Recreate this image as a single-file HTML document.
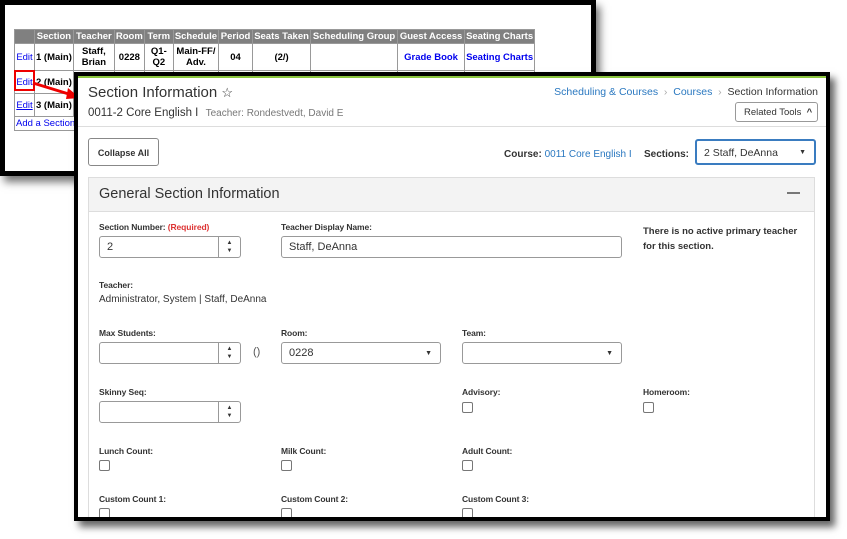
<!DOCTYPE html>
<html><head><meta charset="utf-8"><style>
*{margin:0;padding:0;box-sizing:border-box}
body{width:847px;height:539px;background:#fff;position:relative;overflow:hidden;font-family:"Liberation Sans",sans-serif;color:#333}
.a{position:absolute}
#back{left:0;top:0;width:596px;height:176px;border:5px solid #000;background:#fff;box-shadow:4px 6px 8px rgba(0,0,0,.55)}
table{position:absolute;left:9px;top:24px;border-collapse:collapse;font-size:9.5px;font-weight:bold;color:#000}
td,th{border:1px solid #999;text-align:center;padding:0 1px;white-space:nowrap}
th{background:#808080;color:#fff;height:14px}
td a{color:#00e;font-weight:bold}
#front{left:74px;top:72px;width:756px;height:449px;border:4px solid #000;background:#fff;box-shadow:5px 6px 7px rgba(0,0,0,.6);overflow:hidden}
.lbl{font-size:8.5px;font-weight:bold;color:#333;letter-spacing:-.1px}
.inp{border:1px solid #999;border-radius:3px;background:#fff;height:22px;font-size:11px;padding:4px 7px;color:#333}
.spin{position:absolute;right:0;top:0;width:22px;height:100%;border-left:1px solid #999;font-size:6px;line-height:8px;text-align:center;padding-top:2px}
.cb{width:11px;height:11px;border:1px solid #777;border-radius:2px;background:#fff}
.dd{position:absolute;right:8px;top:7px;font-size:7px}
</style></head><body>
<div id="back" class="a">
<table>
<tr><th style="width:20px"></th><th style="width:37px">Section</th><th style="width:41px">Teacher</th><th style="width:29px">Room</th><th style="width:29px">Term</th><th style="width:44px">Schedule</th><th style="width:34px">Period</th><th style="width:58px">Seats Taken</th><th style="width:87px">Scheduling Group</th><th style="width:67px">Guest Access</th><th style="width:69px">Seating Charts</th></tr>
<tr style="height:27px"><td><a style="font-weight:normal">Edit</a></td><td>1 (Main)</td><td>Staff,<br>Brian</td><td>0228</td><td>Q1-<br>Q2</td><td>Main-FF/<br>Adv.</td><td>04</td><td>(2/)</td><td></td><td><a>Grade Book</a></td><td><a>Seating Charts</a></td></tr>
<tr style="height:23px"><td><a style="font-weight:normal">Edit</a></td><td>2 (Main)</td><td>Staff</td><td></td><td>Q1</td><td>Main-FF/</td><td></td><td></td><td></td><td></td><td></td></tr>
<tr style="height:23px"><td><a style="font-weight:normal;text-decoration:underline">Edit</a></td><td>3 (Main)</td><td></td><td></td><td></td><td></td><td></td><td></td><td></td><td></td><td></td></tr>
<tr style="height:14px"><td colspan="11" style="text-align:left"><a style="font-weight:normal">Add a Section</a></td></tr>
</table>
</div>
<div class="a" style="left:14px;top:70px;width:21px;height:21px;border:2px solid #e00"></div>
<svg class="a" style="left:30px;top:80px" width="52" height="22"><line x1="3" y1="3" x2="42" y2="15" stroke="#e00" stroke-width="3"/><polygon points="50,18 38,8 36,19" fill="#e00"/></svg>

<div id="front" class="a">
<div class="a" style="left:0;top:0;width:100%;height:2px;background:#8cc63f"></div>
<div class="a" style="left:10px;top:8px;font-size:15px;color:#333">Section Information <span style="font-size:13px">☆</span></div>
<div class="a" style="left:10px;top:31px;font-size:11.5px;color:#333">0011-2 Core English I <span style="font-size:10px;color:#777;margin-left:4px">Teacher: Rondestvedt, David E</span></div>
<div class="a" style="right:8px;top:10px;font-size:10.5px;color:#2a78c0">Scheduling &amp; Courses <span style="color:#aaa">&nbsp;›&nbsp;</span> Courses <span style="color:#aaa">&nbsp;›&nbsp;</span> <span style="color:#333">Section Information</span></div>
<div class="a" style="left:657px;top:26px;width:83px;height:20px;border:1px solid #999;border-radius:3px;font-size:9.5px;padding:4px 0 0 8px">Related Tools &nbsp;<b>^</b></div>
<div class="a" style="left:0;top:50px;width:100%;height:1px;background:#ddd"></div>
<div class="a" style="left:10px;top:62px;width:71px;height:28px;border:1px solid #888;border-radius:3px;font-size:9px;font-weight:bold;text-align:center;padding-top:9px">Collapse All</div>
<div class="a" style="left:426px;top:73px;font-size:10px"><b>Course:</b> <span style="color:#2a78c0">0011 Core English I</span></div>
<div class="a" style="left:566px;top:73px;font-size:10px;font-weight:bold">Sections:</div>
<div class="a inp" style="left:617px;top:63px;width:121px;height:26px;border:2px solid #3a7cc0;padding:6px 7px;font-size:10.5px">2 Staff, DeAnna<span class="dd" style="top:8px">▼</span></div>

<div class="a" style="left:10px;top:101px;width:727px;height:360px;border:1px solid #ddd">
<div style="height:34px;background:#f3f3f3;border-bottom:1px solid #ddd;font-size:14.5px;padding:8px 10px;color:#333">General Section Information<span style="position:absolute;right:14px;top:14px;width:13px;height:2px;background:#777"></span></div>
</div>
<div class="a lbl" style="left:21px;top:146px">Section Number: <span style="color:#d33">(Required)</span></div>
<div class="a inp" style="left:21px;top:160px;width:142px">2<div class="spin">▲<br>▼</div></div>
<div class="a lbl" style="left:203px;top:146px">Teacher Display Name:</div>
<div class="a inp" style="left:203px;top:160px;width:341px">Staff, DeAnna</div>
<div class="a" style="left:565px;top:148px;font-size:9.5px;font-weight:bold;line-height:15px">There is no active primary teacher<br>for this section.</div>
<div class="a lbl" style="left:21px;top:204px">Teacher:</div>
<div class="a" style="left:21px;top:218px;font-size:10px">Administrator, System | Staff, DeAnna</div>
<div class="a lbl" style="left:21px;top:252px">Max Students:</div>
<div class="a inp" style="left:21px;top:266px;width:142px"><div class="spin">▲<br>▼</div></div>
<div class="a" style="left:175px;top:270px;font-size:11px;color:#555">()</div>
<div class="a lbl" style="left:203px;top:252px">Room:</div>
<div class="a inp" style="left:203px;top:266px;width:160px">0228<span class="dd">▼</span></div>
<div class="a lbl" style="left:384px;top:252px">Team:</div>
<div class="a inp" style="left:384px;top:266px;width:160px"><span class="dd">▼</span></div>
<div class="a lbl" style="left:21px;top:311px">Skinny Seq:</div>
<div class="a inp" style="left:21px;top:325px;width:142px"><div class="spin">▲<br>▼</div></div>
<div class="a lbl" style="left:384px;top:311px">Advisory:</div>
<div class="a cb" style="left:384px;top:326px"></div>
<div class="a lbl" style="left:565px;top:311px">Homeroom:</div>
<div class="a cb" style="left:565px;top:326px"></div>
<div class="a lbl" style="left:21px;top:370px">Lunch Count:</div>
<div class="a cb" style="left:21px;top:384px"></div>
<div class="a lbl" style="left:203px;top:370px">Milk Count:</div>
<div class="a cb" style="left:203px;top:384px"></div>
<div class="a lbl" style="left:384px;top:370px">Adult Count:</div>
<div class="a cb" style="left:384px;top:384px"></div>
<div class="a lbl" style="left:21px;top:418px">Custom Count 1:</div>
<div class="a cb" style="left:21px;top:432px"></div>
<div class="a lbl" style="left:203px;top:418px">Custom Count 2:</div>
<div class="a cb" style="left:203px;top:432px"></div>
<div class="a lbl" style="left:384px;top:418px">Custom Count 3:</div>
<div class="a cb" style="left:384px;top:432px"></div>
</div>
</body></html>
